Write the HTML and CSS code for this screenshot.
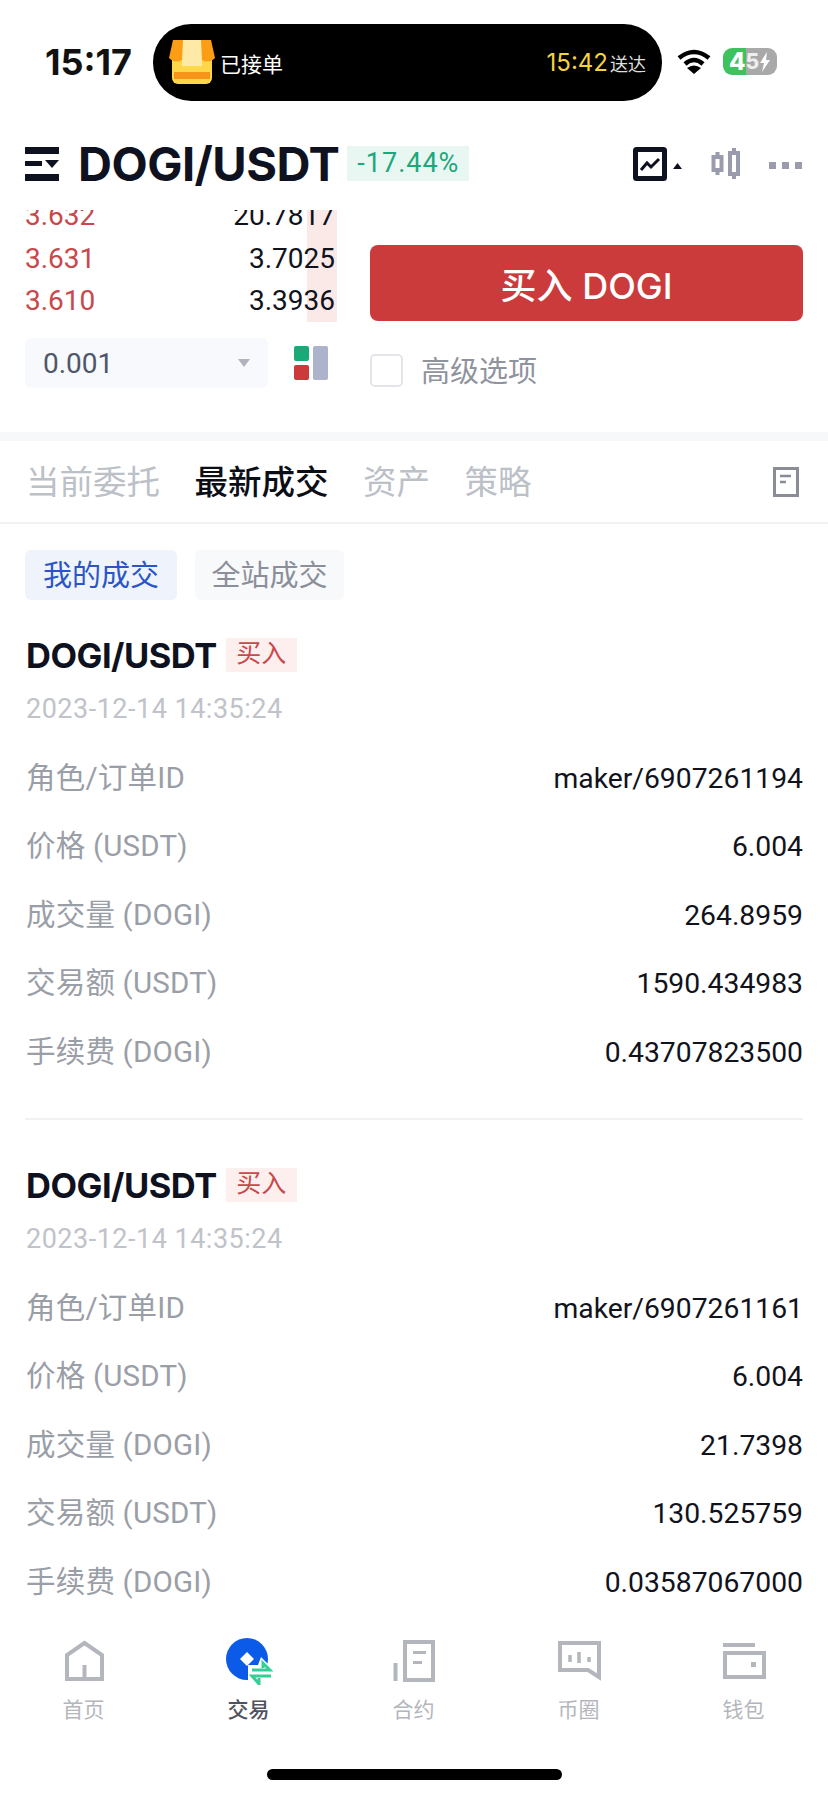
FILE: index.html
```html
<!DOCTYPE html>
<html>
  <head>
    <title>DOGI/USDT</title>
    <meta charset="utf-8" />
    <meta name="viewport" content="width=device-width, initial-scale=1.0" />
    <link rel="stylesheet" href="styles.css">
  </head>
  <body>
    <div class="page">
      <div class="status">
        <span class="clock">15:17</span>
        <div class="island">
          <svg class="box-icon" width="46" height="48" viewBox="0 0 46 48">
            <rect x="3" y="6" width="40" height="40" rx="6" fill="#ffd84a"/>
            <rect x="13" y="2" width="20" height="26" fill="#ffe9a6"/>
            <path d="M4 2 H14 L13 22 Q6 26 0 20 Z" fill="#fb9e16"/>
            <path d="M42 2 H32 L33 22 Q40 26 46 20 Z" fill="#fb9e16"/>
            <rect x="5" y="34" width="36" height="7" fill="#f9941b"/>
          </svg>
          <span class="island-text">已接单</span>
          <span class="island-eta">15:42</span>
          <span class="island-note">送达</span>
        </div>
        <svg class="wifi" width="34" height="26" viewBox="0 0 34 26">
          <path d="M2 9 Q17 -3 32 9" fill="none" stroke="#000" stroke-width="4.5"/>
          <path d="M8 15 Q17 7 26 15" fill="none" stroke="#000" stroke-width="4.5"/>
          <path d="M17 25 L10 19 Q17 14 24 19 Z" fill="#000"/>
        </svg>
        <div class="battery">
          <span>4</span><span>5</span>
          <svg width="12" height="20" viewBox="0 0 12 20"><path d="M8 0 L1 11 H5 L3 20 L11 8 H7 Z" fill="#fff"/></svg>
        </div>
      </div>

      <header class="head">
        <svg width="34" height="34" viewBox="0 0 34 34" class="menu-icon">
          <rect x="0" y="0" width="34" height="7" fill="#0e1220"/>
          <rect x="0" y="14" width="17" height="5" fill="#0e1220"/>
          <path d="M20 13 H34 L27 21 Z" fill="#0e1220"/>
          <rect x="0" y="27" width="34" height="7" fill="#0e1220"/>
        </svg>
        <h1 class="pair">DOGI/USDT</h1>
        <span class="change">-17.44%</span>
        <svg class="chart-icon" width="50" height="34" viewBox="0 0 50 34">
          <rect x="2.5" y="2.5" width="29" height="29" rx="1" fill="none" stroke="#0e1220" stroke-width="5"/>
          <path d="M8 23 L14 16 L18 20 L26 12" fill="none" stroke="#0e1220" stroke-width="3"/>
          <path d="M40 22 L44.500 16 L49 22 Z" fill="#0e1220"/>
        </svg>
        <svg class="candle-icon" width="30" height="32" viewBox="0 0 30 32">
          <path d="M6.500 4 V27 M23 0 V31" stroke="#9a9cae" stroke-width="4"/>
          <rect x="2.500" y="9" width="8" height="13" fill="#fff" stroke="#9a9cae" stroke-width="4"/>
          <rect x="19" y="5" width="8" height="21" fill="#fff" stroke="#9a9cae" stroke-width="4"/>
        </svg>
        <div class="more"><i></i><i></i><i></i></div>
      </header>

      <section class="trade">
        <div class="book">
          <div class="asks">
            <div class="ask"><span>3.632</span><b>20.7817</b></div>
            <div class="ask"><span>3.631</span><b>3.7025</b></div>
            <div class="ask"><span>3.610</span><b>3.3936</b></div>
          </div>
          <div class="book-tools">
            <div class="step"><span>0.001</span><i></i></div>
            <div class="layout-btn">
              <div class="layout-col"><i class="up"></i><i class="down"></i></div>
              <i class="side"></i>
            </div>
          </div>
        </div>
        <div class="order">
          <button class="buy">买入 DOGI</button>
          <label class="adv"><span class="check"></span><span class="adv-text">高级选项</span></label>
        </div>
      </section>

      <div class="band"></div>

      <nav class="tabs">
        <span>当前委托</span>
        <span class="on">最新成交</span>
        <span>资产</span>
        <span>策略</span>
        <svg class="tabs-icon" width="26" height="30" viewBox="0 0 26 30">
          <rect x="1.500" y="1.500" width="23" height="27" fill="none" stroke="#8b8d96" stroke-width="3"/>
          <path d="M7 9 H18 M7 15 H13" stroke="#8b8d96" stroke-width="2.500"/>
        </svg>
      </nav>

      <main class="list">
        <div class="chips">
          <span class="chip active">我的成交</span>
          <span class="chip">全站成交</span>
        </div>

        <article class="fill">
          <div class="fill-head"><strong>DOGI/USDT</strong><em>买入</em></div>
          <time>2023-12-14 14:35:24</time>
          <div class="row"><span>角色/订单ID</span><b>maker/6907261194</b></div>
          <div class="row"><span>价格 (USDT)</span><b>6.004</b></div>
          <div class="row"><span>成交量 (DOGI)</span><b>264.8959</b></div>
          <div class="row"><span>交易额 (USDT)</span><b>1590.434983</b></div>
          <div class="row"><span>手续费 (DOGI)</span><b>0.43707823500</b></div>
        </article>

        <article class="fill">
          <div class="fill-head"><strong>DOGI/USDT</strong><em>买入</em></div>
          <time>2023-12-14 14:35:24</time>
          <div class="row"><span>角色/订单ID</span><b>maker/6907261161</b></div>
          <div class="row"><span>价格 (USDT)</span><b>6.004</b></div>
          <div class="row"><span>成交量 (DOGI)</span><b>21.7398</b></div>
          <div class="row"><span>交易额 (USDT)</span><b>130.525759</b></div>
          <div class="row"><span>手续费 (DOGI)</span><b>0.03587067000</b></div>
        </article>
      </main>

      <footer class="tabbar">
        <a>
          <svg width="48" height="48" viewBox="0 0 48 48" fill="none" stroke="#b4b6bd" stroke-width="4">
            <path d="M7 42 V18 L24.500 6 L42 18 V42 Z M24.500 42 V28"/>
          </svg>
          首页
        </a>
        <a class="current">
          <svg width="48" height="48" viewBox="0 0 48 48">
            <circle cx="22" cy="22" r="21" fill="#0b5be8"/>
            <path d="M22 15 L29 22 L22 29 L15 22 Z" fill="#fff"/>
            <path d="M23 28 H33 L36 20 L48 32 L48 48 H23 Z" fill="#fff"/>
            <path d="M27 33 H45 L38 26 V31 M46 39 H27 L34 47 V41" fill="none" stroke="#35cf95" stroke-width="3"/>
          </svg>
          交易
        </a>
        <a>
          <svg width="48" height="48" viewBox="0 0 48 48" fill="none" stroke="#b4b6bd" stroke-width="4">
            <path d="M5.500 26 V44 M15 43 V5 H43 V43 Z"/>
            <path d="M23 15.500 H36 M23 25.500 H32" stroke-width="3"/>
          </svg>
          合约
        </a>
        <a>
          <svg width="48" height="48" viewBox="0 0 48 48" fill="none" stroke="#b4b6bd" stroke-width="4">
            <path d="M5 6 H44 V40 L33 33 H5 Z"/>
            <path d="M15 18 V25 M24 15 V26 M34 20 V25" stroke-width="3.500"/>
          </svg>
          币圈
        </a>
        <a>
          <svg width="48" height="48" viewBox="0 0 48 48" fill="none" stroke="#b4b6bd" stroke-width="4">
            <path d="M3 8 H35"/>
            <rect x="5" y="16" width="39" height="24"/>
            <rect x="31" y="25" width="5" height="5" fill="#b4b6bd" stroke="none"/>
          </svg>
          钱包
        </a>
      </footer>
      <div class="home-wrap"><div class="home-bar"></div></div>
    </div>
  </body>
</html>
```

FILE: styles.css
```css
* {
  box-sizing: border-box;
}
body {
  margin: 0;
  background: #fff;
  font-family: Roboto, "Noto Sans CJK SC", sans-serif;
  color: #11131c;
}
.page {
  width: 828px;
  height: 1796px;
  display: flex;
  flex-direction: column;
  overflow: hidden;
}

/* status bar */
.status {
  height: 125px;
  padding: 24px 0 0 45px;
  display: flex;
  align-items: flex-start;
}
.clock {
  width: 108px;
  font: 700 36px/77px Inter, sans-serif;
  color: #111;
}
.island {
  width: 509px;
  height: 77px;
  background: #000;
  border-radius: 38px;
  padding: 0 16px 0 16px;
  display: flex;
  align-items: center;
  color: #fff;
}
.box-icon {
  margin-top: -2px;
}
.island-text {
  margin-left: 5px;
  font-size: 21px;
}
.island-eta {
  margin-left: auto;
  font: 24px Inter, sans-serif;
  color: #f5d33f;
}
.island-note {
  margin-left: 2px;
  font-size: 18px;
  color: #ddd;
}
.wifi {
  margin: 25px 0 0 15px;
}
.battery {
  width: 54px;
  height: 27px;
  margin: 24px 0 0 12px;
  border-radius: 9px;
  background: linear-gradient(to right, #3fc15e 0 43%, #a9a9a9 43%);
  display: flex;
  align-items: center;
  justify-content: center;
  font: 800 24px Inter, sans-serif;
  color: #fff;
}
.battery span:nth-child(2) {
  color: #eee;
  font-size: 21px;
}

/* pair header */
.head {
  height: 85px;
  padding: 22px 26px 0 25px;
  display: flex;
  align-items: flex-start;
}
.pair {
  margin: -7px 0 0 19px;
  font: 700 47px/48px Inter, sans-serif;
  letter-spacing: -0.5px;
  color: #0e1220;
}
.change {
  margin: -1px 0 0 8px;
  width: 122px;
  height: 35px;
  line-height: 35px;
  text-align: center;
  background: #e9f7f3;
  font-size: 27px;
  letter-spacing: 1px;
  color: #1fa77c;
}
.chart-icon {
  margin-left: auto;
}
.candle-icon {
  margin: 1px 0 0 28px;
}
.more {
  margin: 15px 0 0 28px;
  display: flex;
  gap: 6px;
}
.more i {
  width: 7px;
  height: 7px;
  background: #9a9cae;
}

/* order book and buy form */
.trade {
  height: 222px;
  padding: 0 25px;
  display: grid;
  grid-template-columns: 312px 433px;
  column-gap: 33px;
}
.asks {
  height: 112px;
  overflow: hidden;
  display: flex;
  flex-direction: column;
  justify-content: flex-end;
  background: linear-gradient(#fbe9e8, #fbe9e8) no-repeat right / 30px 100%;
}
.ask {
  height: 42.500px;
  flex-shrink: 0;
  padding-right: 2px;
  display: flex;
  justify-content: space-between;
  align-items: center;
  font-size: 28px;
}
.ask span {
  color: #c8484c;
}
.ask b {
  font-weight: 400;
  color: #11131c;
}
.book-tools {
  margin-top: 16px;
  display: flex;
  align-items: center;
}
.step {
  width: 243px;
  height: 50px;
  padding: 0 18px;
  border-radius: 6px;
  background: #f7f9fc;
  display: flex;
  align-items: center;
  justify-content: space-between;
  font-size: 28px;
  color: #50566a;
}
.step i {
  width: 0;
  height: 0;
  border-left: 6px solid transparent;
  border-right: 6px solid transparent;
  border-top: 8px solid #b0b3bc;
}
.layout-btn {
  margin-left: 26px;
  display: flex;
  gap: 4px;
}
.layout-col {
  display: flex;
  flex-direction: column;
  gap: 4px;
}
.layout-col i {
  width: 15px;
  height: 15px;
  border-radius: 2px;
}
.layout-col .up {
  background: #18ab78;
}
.layout-col .down {
  background: #cb3b3b;
}
.layout-btn .side {
  width: 15px;
  height: 34px;
  border-radius: 2px;
  background: #aeb3cc;
}
.buy {
  display: block;
  width: 433px;
  height: 76px;
  margin-top: 35px;
  border: 0;
  border-radius: 8px;
  background: #cb3b3b;
  color: #fff;
  font: 500 36px Inter, "Noto Sans CJK SC", sans-serif;
}
.adv {
  margin-top: 29px;
  display: flex;
  align-items: center;
  gap: 18px;
  font-size: 29px;
  color: #8f939d;
}
.adv-text {
  margin-top: -2px;
}
.check {
  width: 33px;
  height: 33px;
  border: 2px solid #e4e5e9;
  border-radius: 5px;
}
.band {
  height: 9px;
  background: #f7f8fa;
}

/* tabs */
.tabs {
  height: 83px;
  padding: 0 29px 4px 26px;
  border-bottom: 2px solid #f0f1f3;
  display: flex;
  align-items: center;
  gap: 34.500px;
  font-size: 33.500px;
  color: #bcc0c7;
}
.tabs .on {
  font-weight: 500;
  color: #0c0e16;
}
.tabs-icon {
  margin: 4px 0 0 auto;
}

/* fills list */
.list {
  flex: 1;
  min-height: 0;
  overflow: hidden;
  padding: 26px 25px 0;
}
.chips {
  display: flex;
  gap: 18px;
}
.chip {
  height: 50px;
  width: 149px;
  line-height: 52px;
  text-align: center;
  border-radius: 6px;
  background: #f8f9fb;
  font-size: 29px;
  color: #8b8f99;
}
.chip.active {
  width: 152px;
  background: #eff3fb;
  color: #2b55c6;
}
.fill {
  height: 520px;
  padding-top: 35px;
  border-bottom: 2px solid #f0f1f3;
}
.fill + .fill {
  height: 530px;
  padding-top: 45px;
  border-bottom: 0;
}
.fill-head {
  height: 40px;
  padding-left: 1px;
  display: flex;
  align-items: center;
}
.fill-head strong {
  font: 700 34.500px Inter, sans-serif;
  letter-spacing: -0.5px;
  color: #0e1220;
}
.fill-head em {
  margin-left: 9px;
  width: 71px;
  height: 34px;
  line-height: 32px;
  text-align: center;
  background: #fcefee;
  font-style: normal;
  font-size: 25px;
  color: #c8484c;
}
time {
  display: block;
  height: 38px;
  margin: 15px 0 16px;
  padding-left: 1px;
  line-height: 38px;
  font-size: 27px;
  letter-spacing: 0.5px;
  color: #c0c3c9;
}
.row {
  height: 68.400px;
  padding-left: 1px;
  display: flex;
  justify-content: space-between;
  align-items: baseline;
  line-height: 68.400px;
  font-size: 28.300px;
}
.row span {
  font-size: 29.500px;
  letter-spacing: 0.2px;
  color: #9a9ea7;
}
.row b {
  font-weight: 400;
  color: #11131c;
}

/* bottom bar */
.tabbar {
  height: 103px;
  padding-left: 1px;
  display: grid;
  grid-template-columns: repeat(5, 165px);
  flex-shrink: 0;
}
.tabbar a {
  display: flex;
  flex-direction: column;
  align-items: center;
  gap: 12px;
  font-size: 21px;
  line-height: 26px;
  color: #b4b6bd;
}
.tabbar .current {
  font-weight: 500;
  color: #50535e;
}
.home-wrap {
  height: 56px;
  padding-top: 29px;
  flex-shrink: 0;
}
.home-bar {
  width: 295px;
  height: 11px;
  margin: 0 auto;
  border-radius: 6px;
  background: #000;
}
```
